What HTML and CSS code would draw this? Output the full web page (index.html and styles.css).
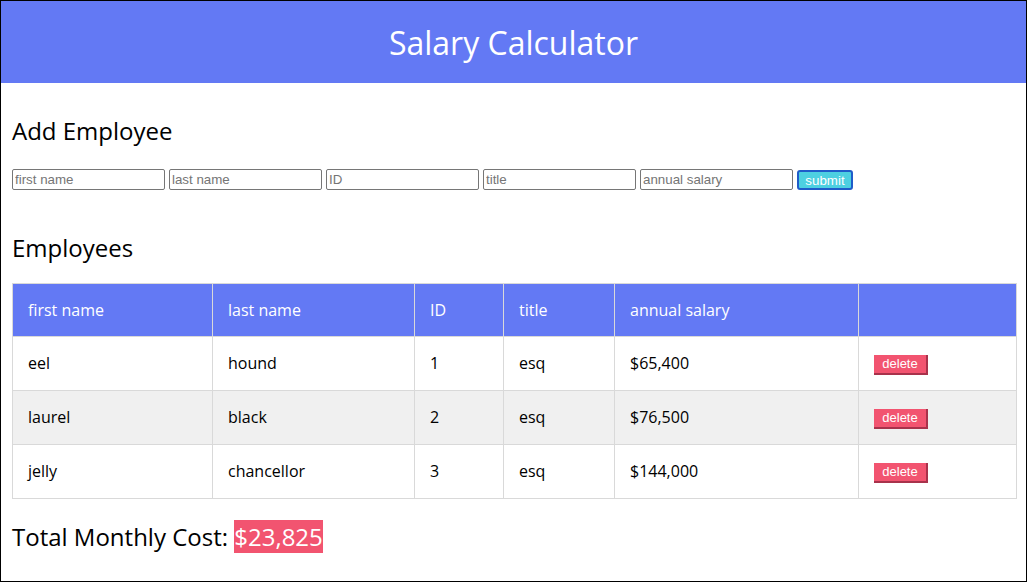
FILE: index.html
```html
<!DOCTYPE html>
<html>
<head>
<meta charset="utf-8">
<title>Salary Calculator</title>
<link rel="stylesheet" href="styles.css">
</head>
<body>
<div class="page">
  <header class="topbar">
    <h1 class="title">Salary Calculator</h1>
  </header>
  <main class="content">
    <h2 class="section-title add-title">Add Employee</h2>
    <form class="add-form">
      <input class="field" type="text" placeholder="first name">
      <input class="field" type="text" placeholder="last name">
      <input class="field" type="text" placeholder="ID">
      <input class="field" type="text" placeholder="title">
      <input class="field" type="text" placeholder="annual salary">
      <button class="submit-btn" type="button">submit</button>
    </form>
    <h2 class="section-title list-title">Employees</h2>
    <table class="emp-table">
      <colgroup>
        <col class="c-first">
        <col class="c-last">
        <col class="c-id">
        <col class="c-title">
        <col class="c-salary">
        <col class="c-action">
      </colgroup>
      <thead>
        <tr><th>first name</th><th>last name</th><th>ID</th><th>title</th><th>annual salary</th><th></th></tr>
      </thead>
      <tbody>
        <tr><td>eel</td><td>hound</td><td>1</td><td>esq</td><td>$65,400</td><td><button class="delete-btn" type="button">delete</button></td></tr>
        <tr class="alt"><td>laurel</td><td>black</td><td>2</td><td>esq</td><td>$76,500</td><td><button class="delete-btn" type="button">delete</button></td></tr>
        <tr><td>jelly</td><td>chancellor</td><td>3</td><td>esq</td><td>$144,000</td><td><button class="delete-btn" type="button">delete</button></td></tr>
      </tbody>
    </table>
    <p class="total">Total Monthly Cost: <span class="total-amount">$23,825</span></p>
  </main>
</div>
</body>
</html>
```

FILE: styles.css
```css
html, body {
  margin: 0;
  padding: 0;
  background: #fff;
}

body {
  font-family: "Open Sans", "Noto Sans", sans-serif;
  color: #000;
}

.page {
  box-sizing: border-box;
  width: 1027px;
  height: 582px;
  border: 1px solid #000;
  overflow: hidden;
}

.topbar {
  box-sizing: border-box;
  height: 82px;
  background: #6379f4;
  padding-top: 20px;
}

.title {
  margin: 0;
  text-align: center;
  color: #fff;
  font-weight: 400;
  font-size: 32px;
  line-height: 44px;
}

.content {
  padding: 0 9px 0 11px;
}

.section-title {
  margin: 0;
  font-weight: 400;
  font-size: 24px;
  line-height: 33px;
}

.add-title {
  padding-top: 31px;
}

.add-form {
  display: flex;
  gap: 4px;
  align-items: flex-start;
  margin: 22px 0 0 0;
  height: 21px;
}

.field {
  box-sizing: border-box;
  width: 153px;
  height: 21px;
  margin: 0;
  padding: 1px 2px;
  border: 1px solid #767676;
  border-radius: 2px;
  font-family: "Liberation Sans", Arial, sans-serif;
  font-size: 13.33px;
  color: #000;
  background: #fff;
}

.field::placeholder {
  color: #757575;
}

.submit-btn {
  box-sizing: border-box;
  width: 56px;
  height: 20px;
  margin-top: 1px;
  padding: 0;
  border: 2px solid #1f5cc9;
  border-radius: 3px;
  background: #4dd0e1;
  color: #fff;
  font-family: "Liberation Sans", Arial, sans-serif;
  font-size: 13.33px;
  line-height: 15px;
}

.list-title {
  margin-top: 41px;
}

.emp-table {
  width: 100%;
  margin-top: 19px;
  border-collapse: collapse;
  table-layout: fixed;
  font-size: 16px;
}

.c-first { width: 200px; }
.c-last { width: 202px; }
.c-id { width: 89px; }
.c-title { width: 111px; }
.c-salary { width: 244px; }
.c-action { width: auto; }

.emp-table th,
.emp-table td {
  border: 1px solid #d9d9d9;
  padding: 15px;
  text-align: left;
  vertical-align: middle;
}

.emp-table th {
  background: #6379f4;
  color: #fff;
  font-weight: 400;
  line-height: 22px;
}

.emp-table td {
  line-height: 23px;
}

.emp-table tr.alt td {
  background: #f0f0f0;
}

.delete-btn {
  box-sizing: border-box;
  display: inline-flex;
  align-items: center;
  justify-content: center;
  height: 20px;
  width: 54px;
  padding: 0;
  margin: 0;
  border: none;
  border-right: 2px solid #a8324b;
  border-bottom: 2px solid #a8324b;
  background: #f25470;
  color: #fff;
  font-family: "Liberation Sans", Arial, sans-serif;
  font-size: 13px;
  line-height: 18px;
  vertical-align: middle;
}

.total {
  margin: 21px 0 0 0;
  font-size: 24px;
  line-height: 33px;
}

.total-amount {
  background: #f25470;
  color: #fff;
}
```
